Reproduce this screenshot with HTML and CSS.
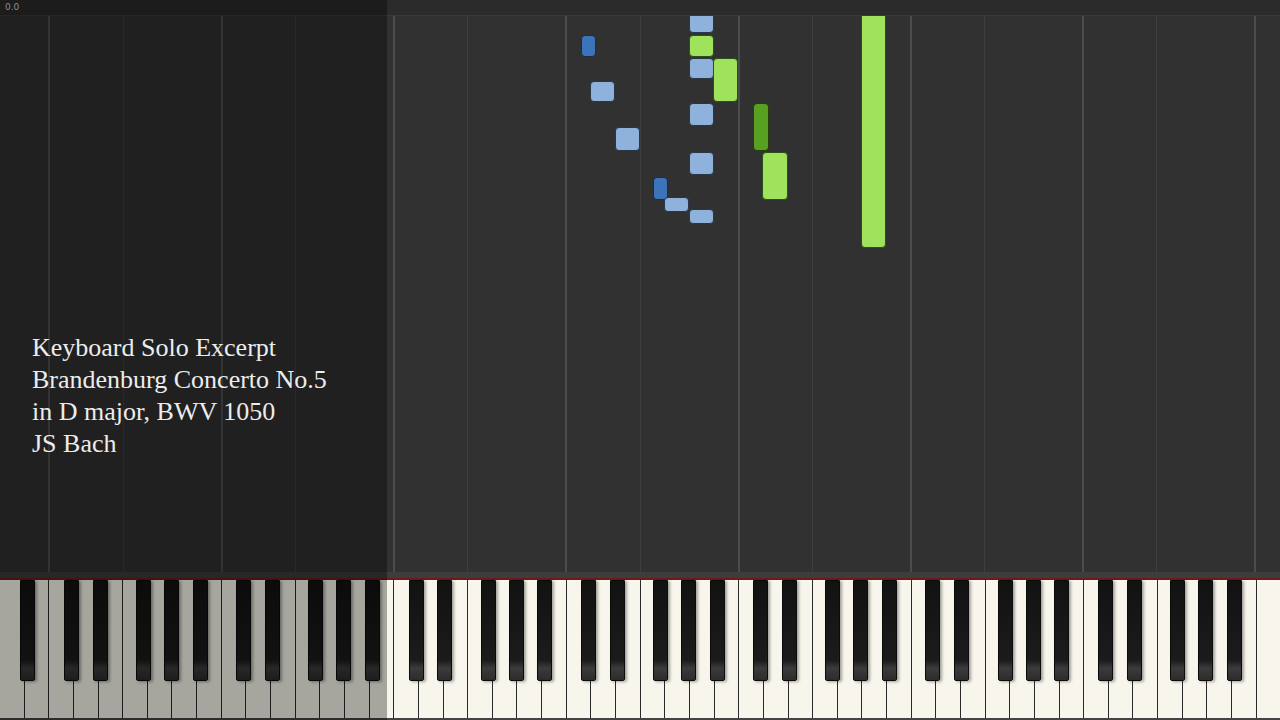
FILE: index.html
```html
<!DOCTYPE html>
<html>
<head>
<meta charset="utf-8">
<link rel="stylesheet" href="styles.css">
</head>
<body>
<div class="stage">
  <div class="topbar"></div>
  <div class="roll" id="roll">
    <div class="note lb" style="left:689px;top:-10px;width:25px;height:27px"></div>
    <div class="note db" style="left:581px;top:19px;width:15px;height:22px"></div>
    <div class="note lg" style="left:689px;top:19px;width:25px;height:22px"></div>
    <div class="note lb" style="left:689px;top:42px;width:25px;height:21px"></div>
    <div class="note lg" style="left:713px;top:42px;width:25px;height:44px"></div>
    <div class="note lb" style="left:590px;top:65px;width:25px;height:21px"></div>
    <div class="note lb" style="left:689px;top:87px;width:25px;height:23px"></div>
    <div class="note dg" style="left:753px;top:87px;width:16px;height:48px"></div>
    <div class="note lb" style="left:615px;top:111px;width:25px;height:24px"></div>
    <div class="note lb" style="left:689px;top:136px;width:25px;height:23px"></div>
    <div class="note lg" style="left:762px;top:136px;width:26px;height:48px"></div>
    <div class="note db" style="left:653px;top:161px;width:15px;height:23px"></div>
    <div class="note lb" style="left:664px;top:181px;width:25px;height:15px"></div>
    <div class="note lb" style="left:689px;top:193px;width:25px;height:15px"></div>
    <div class="note lg" style="left:861px;top:-10px;width:25px;height:242px"></div>
  </div>
  <div class="keybed">
    <div class="rim"></div>
    <div class="redline"></div>
    <div class="keys" id="keys">
      <div class="whites" id="whites"></div>
    </div>
  </div>
  <div class="shade">
    <div class="time">0.0</div>
    <div class="title">
      <div>Keyboard Solo Excerpt</div>
      <div>Brandenburg Concerto No.5</div>
      <div>in D major, BWV 1050</div>
      <div>JS Bach</div>
    </div>
  </div>
</div>
<script src="script.js"></script>
</body>
</html>
```

FILE: styles.css
```css
html, body {
  margin: 0;
  padding: 0;
  background: #000;
}
.stage {
  position: relative;
  width: 1280px;
  height: 720px;
  overflow: hidden;
  display: flex;
  flex-direction: column;
  background: #303030;
  font-family: "Liberation Serif", serif;
}
.topbar {
  height: 15px;
  background: #2b2b2b;
  border-bottom: 1px solid #3a3a3a;
  flex: none;
}
.roll {
  position: relative;
  height: 556px;
  flex: none;
  overflow: hidden;
  background: #313131;
}
.gline {
  position: absolute;
  top: 0;
  bottom: 0;
  width: 1px;
  background: #3e3e3e;
}
.gline.c {
  width: 2px;
  background: #4c4c4c;
}
.note {
  position: absolute;
  box-sizing: border-box;
  border-radius: 4px;
}
.note.lb {
  background: #8fb2dc;
  border: 1px solid #283648;
}
.note.db {
  background: #3b74bb;
  border: 1px solid #1d2c40;
}
.note.lg {
  background: #9ee35b;
  border: 1px solid #2f4d16;
}
.note.dg {
  background: #58a01f;
  border: 1px solid #24400c;
}
.keybed {
  flex: 1;
  display: flex;
  flex-direction: column;
}
.rim {
  height: 6px;
  background: #3d3d3d;
}
.redline {
  height: 2px;
  background: #6e1a1a;
}
.keys {
  position: relative;
  flex: 1;
  background: #f7f5eb;
  border-bottom: 2px solid #444;
}
.whites {
  display: flex;
  height: 100%;
}
.white {
  flex: 1;
  box-sizing: border-box;
  border-right: 1.5px solid #2a2a2a;
  background: #f8f6ec;
}
.white:last-child {
  border-right: none;
}
.black {
  position: absolute;
  top: 0;
  width: 15px;
  height: 101px;
  box-sizing: border-box;
  border: 1px solid #0b0b0b;
  border-radius: 0 0 2px 2px;
  background: linear-gradient(to bottom, #121212 0%, #1b1b1b 80%, #3b3b3b 88%, #2c2c2c 100%);
  box-shadow: 2px 1px 3px rgba(0,0,0,0.35);
}
.shade {
  position: absolute;
  left: 0;
  top: 0;
  width: 387px;
  height: 720px;
  background: rgba(0,0,0,0.33);
  display: flex;
  flex-direction: column;
}
.time {
  font-family: "DejaVu Sans", sans-serif;
  font-size: 9px;
  color: #8c8c8c;
  padding: 2px 0 0 5px;
  height: 14px;
  box-sizing: border-box;
}
.title {
  padding: 318px 0 0 32px;
  font-size: 26px;
  line-height: 32px;
  color: #ececec;
}
```

FILE: script.js
```js
(function () {
  var W = 1280 / 52;
  var whites = document.getElementById('whites');
  var keys = document.getElementById('keys');
  var roll = document.getElementById('roll');
  var offsets = { 0: -2.5, 1: 1.7, 3: -4.2, 4: -0.8, 5: 3.3 };
  for (var w = 0; w < 52; w++) {
    var k = document.createElement('div');
    k.className = 'white';
    whites.appendChild(k);
  }
  for (var w = 0; w < 51; w++) {
    var letter = (w + 5) % 7;
    if (offsets.hasOwnProperty(letter)) {
      var b = document.createElement('div');
      b.className = 'black';
      b.style.left = ((w + 1) * W + offsets[letter] - 7.5).toFixed(1) + 'px';
      keys.appendChild(b);
    }
    var next = (w + 1 + 5) % 7;
    if (next === 0 || next === 3) {
      var g = document.createElement('div');
      g.className = 'gline' + (next === 0 ? ' c' : '');
      g.style.left = ((w + 1) * W - (next === 0 ? 1 : 0.5)).toFixed(1) + 'px';
      roll.insertBefore(g, roll.firstChild);
    }
  }
})();
```
